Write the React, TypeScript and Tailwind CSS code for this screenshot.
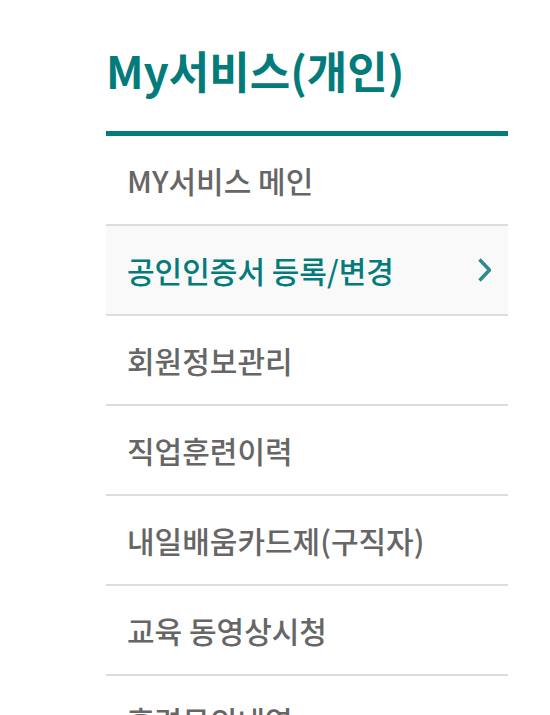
const menu = [
  { label: 'MY서비스 메인' },
  { label: '공인인증서 등록/변경', active: true },
  { label: '회원정보관리' },
  { label: '직업훈련이력' },
  { label: '내일배움카드제(구직자)' },
  { label: '교육 동영상시청' },
  { label: '훈련문의내역' },
]

function Chevron() {
  return (
    <svg width="16" height="26" viewBox="0 0 16 26" fill="none" className="text-[#2e8a8a]">
      <path d="M2.5 2.5 L12.5 13 L2.5 23.5" stroke="currentColor" strokeWidth="3.5" strokeLinejoin="round" />
    </svg>
  )
}

export default function App() {
  return (
    <div className="h-screen overflow-hidden bg-white" style={{ fontFamily: '"Noto Sans CJK KR", "Noto Sans", sans-serif' }}>
      <div className="ml-[106px] w-[402px] pt-[40px]">
        <h2 className="text-[44px] font-bold text-[#047b7b] leading-[60px] pb-[31px] border-b-[5px] border-[#047b7b]">
          My서비스(개인)
        </h2>
        <ul>
          {menu.map(m => (
            <li
              key={m.label}
              className={`h-[90px] border-b-2 border-[#dddddd] flex items-center justify-between pl-[21px] pr-[15px] ${
                m.active ? 'bg-[#f9f9f9] text-[#047b7b]' : 'text-[#666666]'
              }`}
            >
              <span className="text-[30px] font-medium leading-none">{m.label}</span>
              {m.active && <Chevron />}
            </li>
          ))}
        </ul>
      </div>
    </div>
  )
}
